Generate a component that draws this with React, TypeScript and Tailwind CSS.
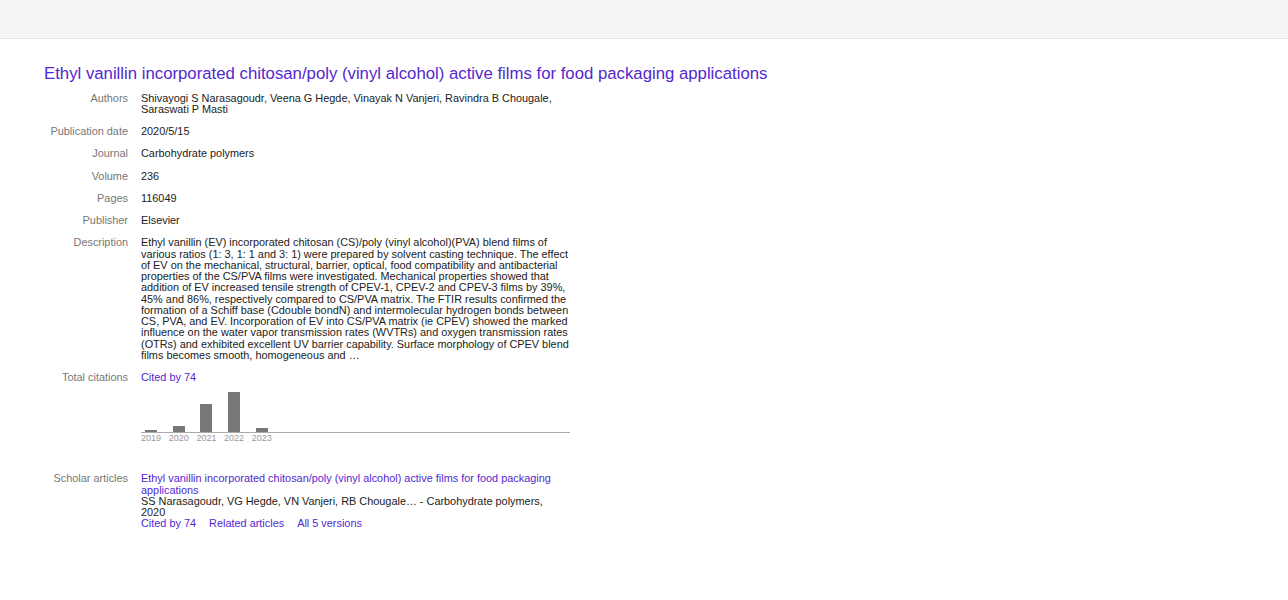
const fields = [
  {
    label: "Authors",
    value:
      "Shivayogi S Narasagoudr, Veena G Hegde, Vinayak N Vanjeri, Ravindra B Chougale, Saraswati P Masti",
  },
  { label: "Publication date", value: "2020/5/15" },
  { label: "Journal", value: "Carbohydrate polymers" },
  { label: "Volume", value: "236" },
  { label: "Pages", value: "116049" },
  { label: "Publisher", value: "Elsevier" },
  {
    label: "Description",
    value:
      "Ethyl vanillin (EV) incorporated chitosan (CS)/poly (vinyl alcohol)(PVA) blend films of various ratios (1: 3, 1: 1 and 3: 1) were prepared by solvent casting technique. The effect of EV on the mechanical, structural, barrier, optical, food compatibility and antibacterial properties of the CS/PVA films were investigated. Mechanical properties showed that addition of EV increased tensile strength of CPEV-1, CPEV-2 and CPEV-3 films by 39%, 45% and 86%, respectively compared to CS/PVA matrix. The FTIR results confirmed the formation of a Schiff base (Cdouble bondN) and intermolecular hydrogen bonds between CS, PVA, and EV. Incorporation of EV into CS/PVA matrix (ie CPEV) showed the marked influence on the water vapor transmission rates (WVTRs) and oxygen transmission rates (OTRs) and exhibited excellent UV barrier capability. Surface morphology of CPEV blend films becomes smooth, homogeneous and …",
  },
];

const citations = [
  { year: "2019", h: 2 },
  { year: "2020", h: 6 },
  { year: "2021", h: 28 },
  { year: "2022", h: 40 },
  { year: "2023", h: 4 },
];

function Row({ label, children, className = "" }: { label: string; children: React.ReactNode; className?: string }) {
  return (
    <div className={`flex py-[5.5px] ${className}`}>
      <div className="w-[84px] shrink-0 text-right text-[#777]">{label}</div>
      <div className="ml-[13px] w-[433px] text-[#222]">{children}</div>
    </div>
  );
}

export default function App() {
  return (
    <div className="min-h-[600px] bg-white font-['Liberation_Sans',Arial,sans-serif]">
      <div className="h-[39px] border-b border-[#e5e5e5] bg-[#f5f5f5]" />

      <div className="pl-[44px] pt-[25px]">
        <a href="#" className="block text-[16.75px] leading-[19px] text-[#5227cf]">
          Ethyl vanillin incorporated chitosan/poly (vinyl alcohol) active films for food packaging applications
        </a>

        <div className="mt-[4px] text-[10.9px] leading-[11.25px]">
          {fields.map((f) => (
            <Row key={f.label} label={f.label}>
              {f.value}
            </Row>
          ))}

          <Row label="Total citations">
            <a href="#" className="text-[#5227cf]">
              Cited by 74
            </a>
            <div className="mt-[10px] w-[429px]">
              <div className="flex h-[40px] items-end gap-[7.7px] border-b border-[#aaa]">
                {citations.map((c) => (
                  <div key={c.year} className="flex w-[20px] justify-center">
                    <div className="w-[12px] bg-[#777]" style={{ height: c.h }} />
                  </div>
                ))}
              </div>
              <div className="flex gap-[7.7px]">
                {citations.map((c) => (
                  <div key={c.year} className="w-[20px] text-center text-[9px] leading-[10px] text-[#999]">
                    {c.year}
                  </div>
                ))}
              </div>
            </div>
          </Row>

          <Row label="Scholar articles" className="mt-[19px]">
            <div className="w-[420px]">
              <a href="#" className="text-[#5227cf]">
                Ethyl vanillin incorporated chitosan/poly (vinyl alcohol) active films for food packaging applications
              </a>
              <div>SS Narasagoudr, VG Hegde, VN Vanjeri, RB Chougale… - Carbohydrate polymers, 2020</div>
              <div className="flex gap-[13px] text-[#5227cf]">
                <a href="#">Cited by 74</a>
                <a href="#">Related articles</a>
                <a href="#">All 5 versions</a>
              </div>
            </div>
          </Row>
        </div>
      </div>
    </div>
  );
}
